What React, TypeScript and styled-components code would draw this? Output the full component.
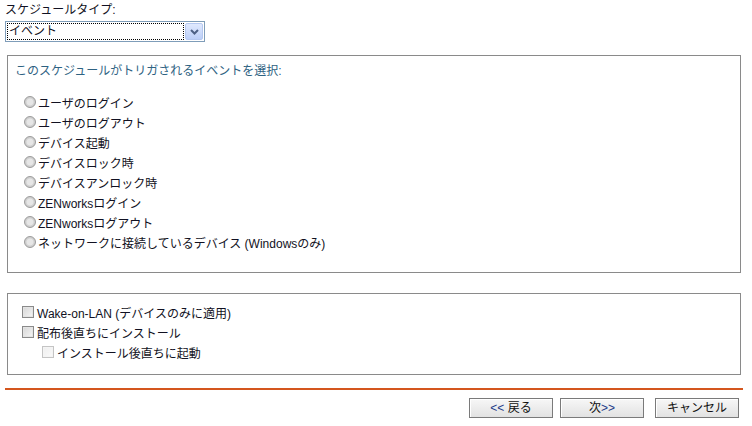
import React from 'react';
import styled, { createGlobalStyle } from 'styled-components';

const GlobalStyle = createGlobalStyle`
  html, body {
    margin: 0;
    padding: 0;
    background: #ffffff;
  }
  body {
    font-family: "Liberation Sans", "Noto Sans CJK JP", sans-serif;
    font-size: 12px;
    color: #111122;
  }
`;

const Page = styled.div`
  width: 752px;
  height: 426px;
  box-sizing: border-box;
  padding: 2px 9px 0 5px;
  overflow: hidden;
`;

const FieldLabel = styled.div`
  line-height: 17px;
  height: 17px;
`;

const Select = styled.div`
  margin-top: 2px;
  width: 200px;
  height: 21px;
  box-sizing: border-box;
  border: 1px solid #7f9db9;
  display: flex;
  align-items: stretch;
  padding: 1px;
  background: #fff;
`;

const SelectValue = styled.div`
  flex: 1;
  border: 1px dotted #000;
  line-height: 15px;
  padding-left: 1px;
  margin-right: 1px;
`;

const SelectButton = styled.div`
  width: 16px;
  display: flex;
  align-items: center;
  justify-content: center;
  border: 1px solid #b5c8f0;
  border-radius: 2px;
  background: linear-gradient(#e0e9fe, #bccff8);
`;

const Box = styled.div<{ $height: number; $gap: number }>`
  margin: ${(p) => p.$gap}px 0 0 2px;
  width: 734px;
  height: ${(p) => p.$height}px;
  box-sizing: border-box;
  border: 1px solid #8a8a8a;
  padding: ${(p) => (p.$height > 100 ? '7px 0 0 7px' : '8px 0 0 14px')};
`;

const Prompt = styled.div`
  color: #2e6282;
  line-height: 16px;
  margin-bottom: 13px;
`;

const Row = styled.label<{ $indent?: number }>`
  display: flex;
  align-items: center;
  height: 20px;
  padding-left: ${(p) => p.$indent ?? 0}px;
  white-space: nowrap;
`;

const Radio = styled.span`
  width: 12px;
  height: 12px;
  margin: 0 2px 0 9px;
  border-radius: 50%;
  box-sizing: border-box;
  border: 1px solid #9a9a9a;
  background: radial-gradient(circle at 50% 50%, #e6e6e6 0 3px, #cfcfcf 4px);
`;

const Check = styled.span<{ $disabled?: boolean }>`
  width: 12px;
  height: 12px;
  margin-right: 3px;
  box-sizing: border-box;
  border: 1px solid ${(p) => (p.$disabled ? '#c4c4c4' : '#8a8a8a')};
  background: ${(p) =>
    p.$disabled
      ? 'linear-gradient(135deg, #eeeeee, #fafafa)'
      : 'linear-gradient(135deg, #d6d6d6, #f6f6f6)'};
  box-shadow: inset 0 0 0 1px ${(p) => (p.$disabled ? '#f4f4f4' : '#e4e4e4')};
`;

const Rule = styled.div`
  margin-top: 13px;
  height: 2px;
  width: 738px;
  background: #d4561e;
`;

const ButtonBar = styled.div`
  display: flex;
  justify-content: flex-end;
  gap: 7px;
  margin: 8px 4px 0 0;
`;

const Button = styled.button<{ $gap?: number }>`
  width: 84px;
  height: 20px;
  margin-left: ${(p) => p.$gap ?? 0}px;
  padding: 0;
  font: inherit;
  color: #111;
  border: 1px solid #7a7a7a;
  border-radius: 0;
  background: linear-gradient(#f7f7f7, #e2e2e2);
  box-shadow: inset 1px 1px 0 #ffffff;
  line-height: 18px;
`;

const Arrows = styled.span`
  color: #1f3d8a;
`;

const events = [
  'ユーザのログイン',
  'ユーザのログアウト',
  'デバイス起動',
  'デバイスロック時',
  'デバイスアンロック時',
  'ZENworksログイン',
  'ZENworksログアウト',
  'ネットワークに接続しているデバイス (Windowsのみ)',
];

const Chevron = () => (
  <svg width="9" height="6" viewBox="0 0 9 6">
    <path d="M1 1 L4.5 4.5 L8 1" fill="none" stroke="#4d6185" strokeWidth="2" />
  </svg>
);

export default function App() {
  return (
    <Page>
      <GlobalStyle />
      <FieldLabel>スケジュールタイプ:</FieldLabel>
      <Select>
        <SelectValue>イベント</SelectValue>
        <SelectButton>
          <Chevron />
        </SelectButton>
      </Select>

      <Box $height={218} $gap={13}>
        <Prompt>このスケジュールがトリガされるイベントを選択:</Prompt>
        {events.map((e) => (
          <Row key={e}>
            <Radio />
            {e}
          </Row>
        ))}
      </Box>

      <Box $height={82} $gap={20}>
        <Row>
          <Check />
          Wake-on-LAN (デバイスのみに適用)
        </Row>
        <Row>
          <Check />
          配布後直ちにインストール
        </Row>
        <Row $indent={20}>
          <Check $disabled />
          インストール後直ちに起動
        </Row>
      </Box>

      <Rule />
      <ButtonBar>
        <Button>
          <Arrows>&lt;&lt;</Arrows> 戻る
        </Button>
        <Button>
          次<Arrows>&gt;&gt;</Arrows>
        </Button>
        <Button $gap={4}>キャンセル</Button>
      </ButtonBar>
    </Page>
  );
}
